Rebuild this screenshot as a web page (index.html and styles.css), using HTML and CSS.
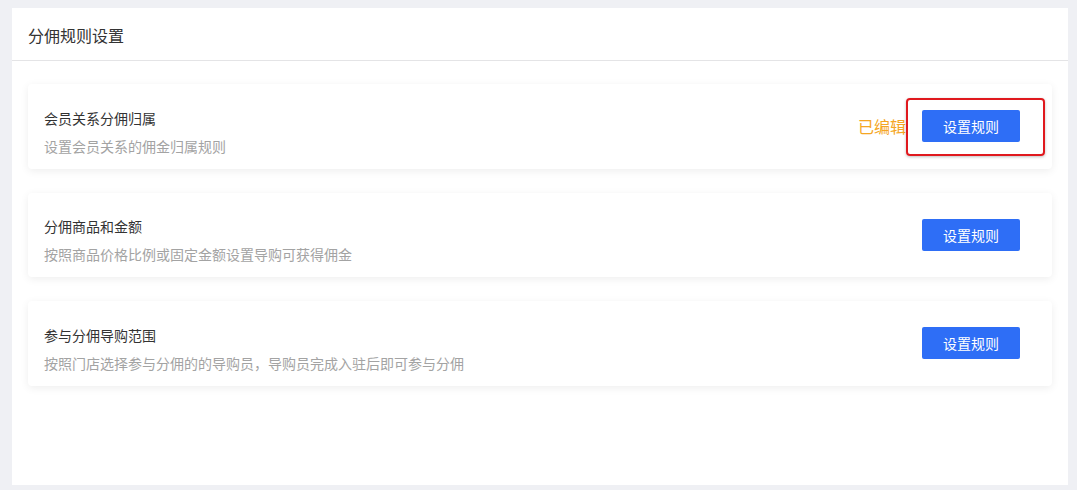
FILE: index.html
```html
<!DOCTYPE html>
<html lang="zh-CN">
<head>
    <meta charset="UTF-8">
    <meta name="viewport" content="width=device-width, initial-scale=1.0">
    <title>分佣规则设置</title>
    <link rel="stylesheet" href="styles.css">
</head>
<body>
    <div class="panel">
        <div class="panel-header">分佣规则设置</div>
        <div class="panel-body">
            <div class="rule-card">
                <div class="rule-info">
                    <div class="rule-title">会员关系分佣归属</div>
                    <div class="rule-desc">设置会员关系的佣金归属规则</div>
                </div>
                <div class="rule-actions">
                    <span class="edited">已编辑</span>
                    <button class="btn-primary" type="button">设置规则</button>
                    <span class="highlight-box"></span>
                </div>
            </div>
            <div class="rule-card">
                <div class="rule-info">
                    <div class="rule-title">分佣商品和金额</div>
                    <div class="rule-desc">按照商品价格比例或固定金额设置导购可获得佣金</div>
                </div>
                <div class="rule-actions">
                    <button class="btn-primary" type="button">设置规则</button>
                </div>
            </div>
            <div class="rule-card">
                <div class="rule-info">
                    <div class="rule-title">参与分佣导购范围</div>
                    <div class="rule-desc">按照门店选择参与分佣的的导购员，导购员完成入驻后即可参与分佣</div>
                </div>
                <div class="rule-actions">
                    <button class="btn-primary" type="button">设置规则</button>
                </div>
            </div>
        </div>
    </div>
</body>
</html>
```

FILE: styles.css
```css
body {
    font-family: "Noto Sans CJK SC", "Noto Sans", sans-serif;
    background-color: #eff0f4;
    margin: 0;
    padding: 8px 9px 5px 12px;
}
.panel {
    background: #fff;
    height: 477px;
}
.panel-header {
    height: 52px;
    line-height: 54px;
    padding: 0 16px;
    font-size: 16px;
    color: #333;
    border-bottom: 1px solid #e4e4e6;
}
.panel-body {
    display: flex;
    flex-direction: column;
    gap: 24px;
    padding: 23px 16px 0 16px;
}
.rule-card {
    display: flex;
    align-items: center;
    justify-content: space-between;
    height: 84.5px;
    padding: 0 32px 0 16px;
    border-radius: 4px;
    background: #fff;
    box-shadow: 0 2px 8px rgba(0, 0, 0, 0.07);
}
.rule-info {
    padding-top: 11px;
}
.rule-title {
    font-size: 14px;
    line-height: 20px;
    color: #333;
    margin-bottom: 8px;
}
.rule-desc {
    font-size: 14px;
    line-height: 20px;
    color: #a3a3a3;
}
.rule-actions {
    position: relative;
    display: flex;
    align-items: center;
}
.edited {
    font-size: 16px;
    color: #f5a623;
    margin-right: 16px;
}
.btn-primary {
    width: 98px;
    height: 32px;
    padding: 0;
    border: none;
    border-radius: 2px;
    background-color: #2e6ef6;
    color: #fff;
    font-family: inherit;
    font-size: 14px;
    cursor: pointer;
}
.highlight-box {
    position: absolute;
    right: -25px;
    top: -12px;
    width: 135px;
    height: 54px;
    border: 2px solid #e0191e;
    border-radius: 4px;
    box-shadow: 0 1px 3px rgba(0, 0, 0, 0.25);
}
```
